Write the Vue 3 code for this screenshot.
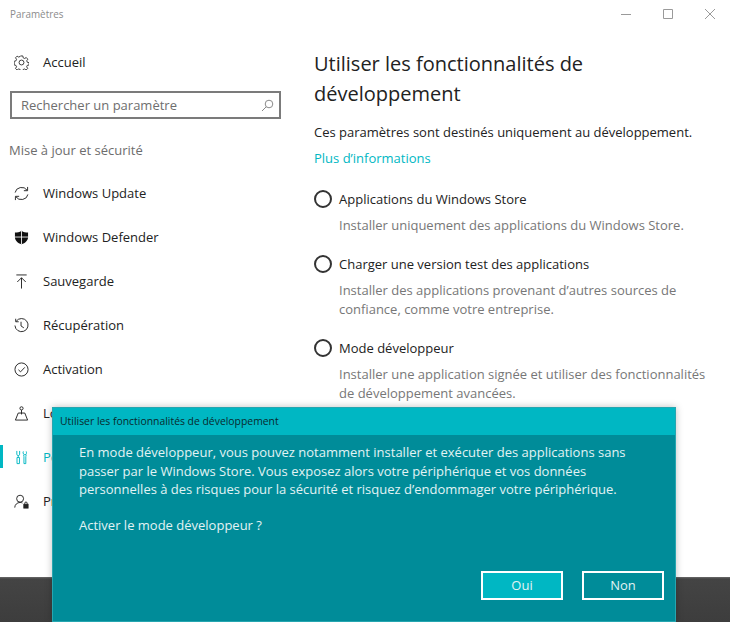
<script setup>
const items = [
  { label: 'Windows Update', icon: 'update' },
  { label: 'Windows Defender', icon: 'shield' },
  { label: 'Sauvegarde', icon: 'backup' },
  { label: 'Récupération', icon: 'history' },
  { label: 'Activation', icon: 'check' },
  { label: 'Localiser mon appareil', icon: 'find' },
  { label: 'Pour les développeurs', icon: 'dev', active: true },
  { label: 'Programme Windows Insider', icon: 'insider' }
]
const options = [
  { title: 'Applications du Windows Store', lines: ['Installer uniquement des applications du Windows Store.'] },
  { title: 'Charger une version test des applications', lines: ['Installer des applications provenant d’autres sources de', 'confiance, comme votre entreprise.'] },
  { title: 'Mode développeur', lines: ['Installer une application signée et utiliser des fonctionnalités', 'de développement avancées.'] }
]
</script>

<template>
  <div class="screen">
    <div class="window">
      <header class="titlebar">
        <span class="apptitle">Paramètres</span>
        <div class="controls">
          <svg width="10" height="10" viewBox="0 0 10 10"><path d="M0 5.500h10" stroke="#9a9a9a" fill="none"/></svg>
          <svg width="10" height="10" viewBox="0 0 10 10"><path d="M.5 .5h9v9h-9z" stroke="#9a9a9a" fill="none"/></svg>
          <svg width="10" height="10" viewBox="0 0 10 10"><path d="M0 0l10 10M10 0L0 10" stroke="#9a9a9a" fill="none"/></svg>
        </div>
      </header>
      <div class="columns">
        <aside class="sidebar">
          <div class="home">
            <svg class="icon" viewBox="0 0 16 16" fill="none" stroke="#333" stroke-width="1">
              <circle cx="8" cy="8" r="2.600"/>
              <path d="M6.800 1h2.400l.4 2 1.500.7 1.800-1 1.600 1.800-1.100 1.600.5 1.600 2 .5v2.400l-2 .5-.6 1.500 1.100 1.700-1.700 1.700-1.700-1.100-1.500.6-.5 1.900H6.800l-.4-1.900-1.600-.6-1.700 1.100-1.700-1.700 1.100-1.700-.6-1.500-1.900-.5V6.700l1.900-.5.6-1.600-1.100-1.600 1.700-1.800 1.700 1 1.600-.7z" transform="translate(.2 0)"/>
            </svg>
            <span>Accueil</span>
          </div>
          <div class="search">
            <span>Rechercher un paramètre</span>
            <svg width="13" height="13" viewBox="0 0 13 13" fill="none" stroke="#8a8a8a"><circle cx="8" cy="5" r="3.800"/><path d="M5.200 7.800L1 12"/></svg>
          </div>
          <div class="section">Mise à jour et sécurité</div>
          <nav class="nav">
            <div v-for="item in items" :key="item.label" class="nav-item" :class="{ active: item.active }">
              <span v-if="item.active" class="marker"></span>
              <svg class="icon" viewBox="0 0 16 16" fill="none" stroke="currentColor" stroke-width="1">
                <template v-if="item.icon === 'update'">
                  <path d="M1.200 7A7 6.500 0 0 1 14 4.500"/><path d="M14.500 1V5H10.500"/>
                  <path d="M14.800 9A7 6.500 0 0 1 2 11.500"/><path d="M1.500 15V11H5.500"/>
                </template>
                <template v-else-if="item.icon === 'shield'">
                  <path d="M8 .7c2 1.500 4.500 2 7 2v5c0 3.500-3 6.200-7 7.600C4 13.900 1 11.200 1 7.700v-5c2.500 0 5-.5 7-2z" fill="#111" stroke="none"/>
                  <path d="M8 1v14M1 7.500h14" stroke="#fff" stroke-width=".9"/>
                </template>
                <template v-else-if="item.icon === 'backup'">
                  <path d="M2.500 1h11M8 15.500V4M3.500 8.500L8 4l4.500 4.500"/>
                </template>
                <template v-else-if="item.icon === 'history'">
                  <path d="M2.300 3.500A7 7 0 1 1 1 8"/><path d="M1.800 .8v3.200h3.200"/><path d="M7.500 4v4.500l3 2"/>
                </template>
                <template v-else-if="item.icon === 'check'">
                  <circle cx="8" cy="8" r="7"/><path d="M4.700 8.300l2.300 2.200 4.500-4.800"/>
                </template>
                <template v-else-if="item.icon === 'find'">
                  <circle cx="8" cy="2.500" r="1.700"/><path d="M8 4.200V9"/><path d="M4.500 7.500h7L14.500 15h-13z"/>
                </template>
                <template v-else-if="item.icon === 'dev'">
                  <path d="M3 1v3.500c0 1 .7 1.500 1.500 1.500S6 5.500 6 4.500V1M4.500 6v1.500M3.200 8v6.500h2.600V8z"/>
                  <path d="M10 1.500c-.6.700-.6 3 1.500 3.500s2.100-2.800 1.500-3.500M10.200 5l.4 2v7.500h2V7l.4-2"/>
                </template>
                <template v-else>
                  <circle cx="6.500" cy="5" r="3.700"/><path d="M.8 14.500c0-3 2.500-5.500 5.700-5.500 1 0 1.800.2 2.500.6"/>
                  <rect x="10.500" y="11" width="4.500" height="4" fill="currentColor"/><path d="M11.500 11V9.800a1.200 1.200 0 0 1 2.500 0V11"/>
                </template>
              </svg>
              <span class="label">{{ item.label }}</span>
            </div>
          </nav>
        </aside>
        <main class="content">
          <h1>Utiliser les fonctionnalités de<br>développement</h1>
          <p class="intro">Ces paramètres sont destinés uniquement au développement.</p>
          <a class="more">Plus d’informations</a>
          <div class="options">
            <div v-for="opt in options" :key="opt.title" class="option">
              <div class="opt-head"><span class="radio"></span><span>{{ opt.title }}</span></div>
              <p class="opt-desc"><template v-for="(l, i) in opt.lines" :key="i">{{ l }}<br></template></p>
            </div>
          </div>
        </main>
      </div>
    </div>
    <div class="desktop"></div>

    <section class="dialog">
      <div class="dialog-title">Utiliser les fonctionnalités de développement</div>
      <div class="dialog-body">
        <p>En mode développeur, vous pouvez notamment installer et exécuter des applications sans<br>passer par le Windows Store. Vous exposez alors votre périphérique et vos données<br>personnelles à des risques pour la sécurité et risquez d’endommager votre périphérique.</p>
        <p class="ask">Activer le mode développeur ?</p>
        <div class="buttons">
          <button class="primary">Oui</button>
          <button>Non</button>
        </div>
      </div>
    </section>
  </div>
</template>

<style>
html, body { margin: 0; padding: 0; overflow: hidden; }
</style>

<style scoped>
.screen {
  position: relative;
  width: 730px;
  height: 622px;
  overflow: hidden;
  display: flex;
  flex-direction: column;
  background: #fff;
  font-family: "Open Sans", "Noto Sans", sans-serif;
  font-size: 13px;
  color: #222;
}
.window { height: 577px; display: flex; flex-direction: column; overflow: hidden; }
.desktop {
  flex: 1;
  background: linear-gradient(#6a6a6a 0, #444 2px, #3d3d3d 100%);
}
.titlebar {
  height: 30px;
  display: flex;
  justify-content: space-between;
  align-items: center;
  padding: 0 15px 2px 10px;
  box-sizing: border-box;
}
.apptitle { font-size: 9.900px; color: #8c8c8c; }
.controls { display: flex; gap: 32px; }
.columns { flex: 1; display: flex; }
.sidebar { width: 314px; flex: none; }
.icon { width: 15px; height: 15px; flex: none; }
.home {
  height: 44px;
  margin-top: 10px;
  padding-left: 14px;
  display: flex;
  align-items: center;
  gap: 14px;
  margin-bottom: 7px;
}
.search {
  box-sizing: border-box;
  width: 271px;
  height: 28px;
  margin-left: 10px;
  border: 2px solid #7b7b7b;
  display: flex;
  justify-content: space-between;
  align-items: center;
  padding: 0 5px 0 9px;
  color: #6e6e6e;
}
.section { margin: 21px 0 11px 9px; color: #6d6d6d; line-height: 20px; }
.nav-item {
  position: relative;
  height: 44px;
  padding-left: 14px;
  display: flex;
  align-items: center;
  gap: 14px;
  color: #222;
}
.nav-item .label { white-space: nowrap; }
.nav-item.active { color: #00b7c3; }
.marker {
  position: absolute;
  left: 0;
  top: 10px;
  width: 3px;
  height: 23px;
  background: #00b7c3;
}
.content { flex: 1; padding-top: 19px; }
h1 {
  margin: 0;
  font-size: 20px;
  font-weight: 400;
  line-height: 30px;
  color: #222;
}
.intro { margin: 13px 0 0; line-height: 20px; }
.more { display: block; margin-top: 6px; line-height: 20px; color: #00b7c3; }
.options { margin-top: 20px; display: flex; flex-direction: column; gap: 18px; }
.opt-head { display: flex; align-items: center; gap: 7px; height: 22px; }
.radio {
  box-sizing: border-box;
  width: 18px;
  height: 18px;
  border: 2px solid #333;
  border-radius: 50%;
}
.opt-desc { margin: 6px 0 0 25px; line-height: 19px; color: #777; white-space: nowrap; }
.dialog {
  position: absolute;
  left: 52px;
  top: 407px;
  width: 624px;
  bottom: 0;
  background: #008c99;
  box-shadow: 0 0 7px rgba(0, 0, 0, .25);
  display: flex;
  flex-direction: column;
  outline: 1px solid #26a6b0;
  outline-offset: -1px;
}
.dialog-title {
  height: 28px;
  background: #00b7c3;
  color: #0a2a2e;
  font-size: 10.400px;
  line-height: 28px;
  padding-left: 8px;
}
.dialog-body { flex: 1; padding: 8px 12px 0 27px; color: #e2f3f4; line-height: 18.500px; display: flex; flex-direction: column; }
.dialog-body p { margin: 0; }
.ask { margin-top: 17px !important; }
.buttons { display: flex; justify-content: flex-end; gap: 19px; margin-top: 37px; }
button {
  box-sizing: border-box;
  width: 82px;
  height: 29px;
  border: 2px solid #fff;
  background: #008c99;
  color: #e2f3f4;
  font: inherit;
  padding: 0;
}
button.primary { background: #00b7c3; }
</style>
